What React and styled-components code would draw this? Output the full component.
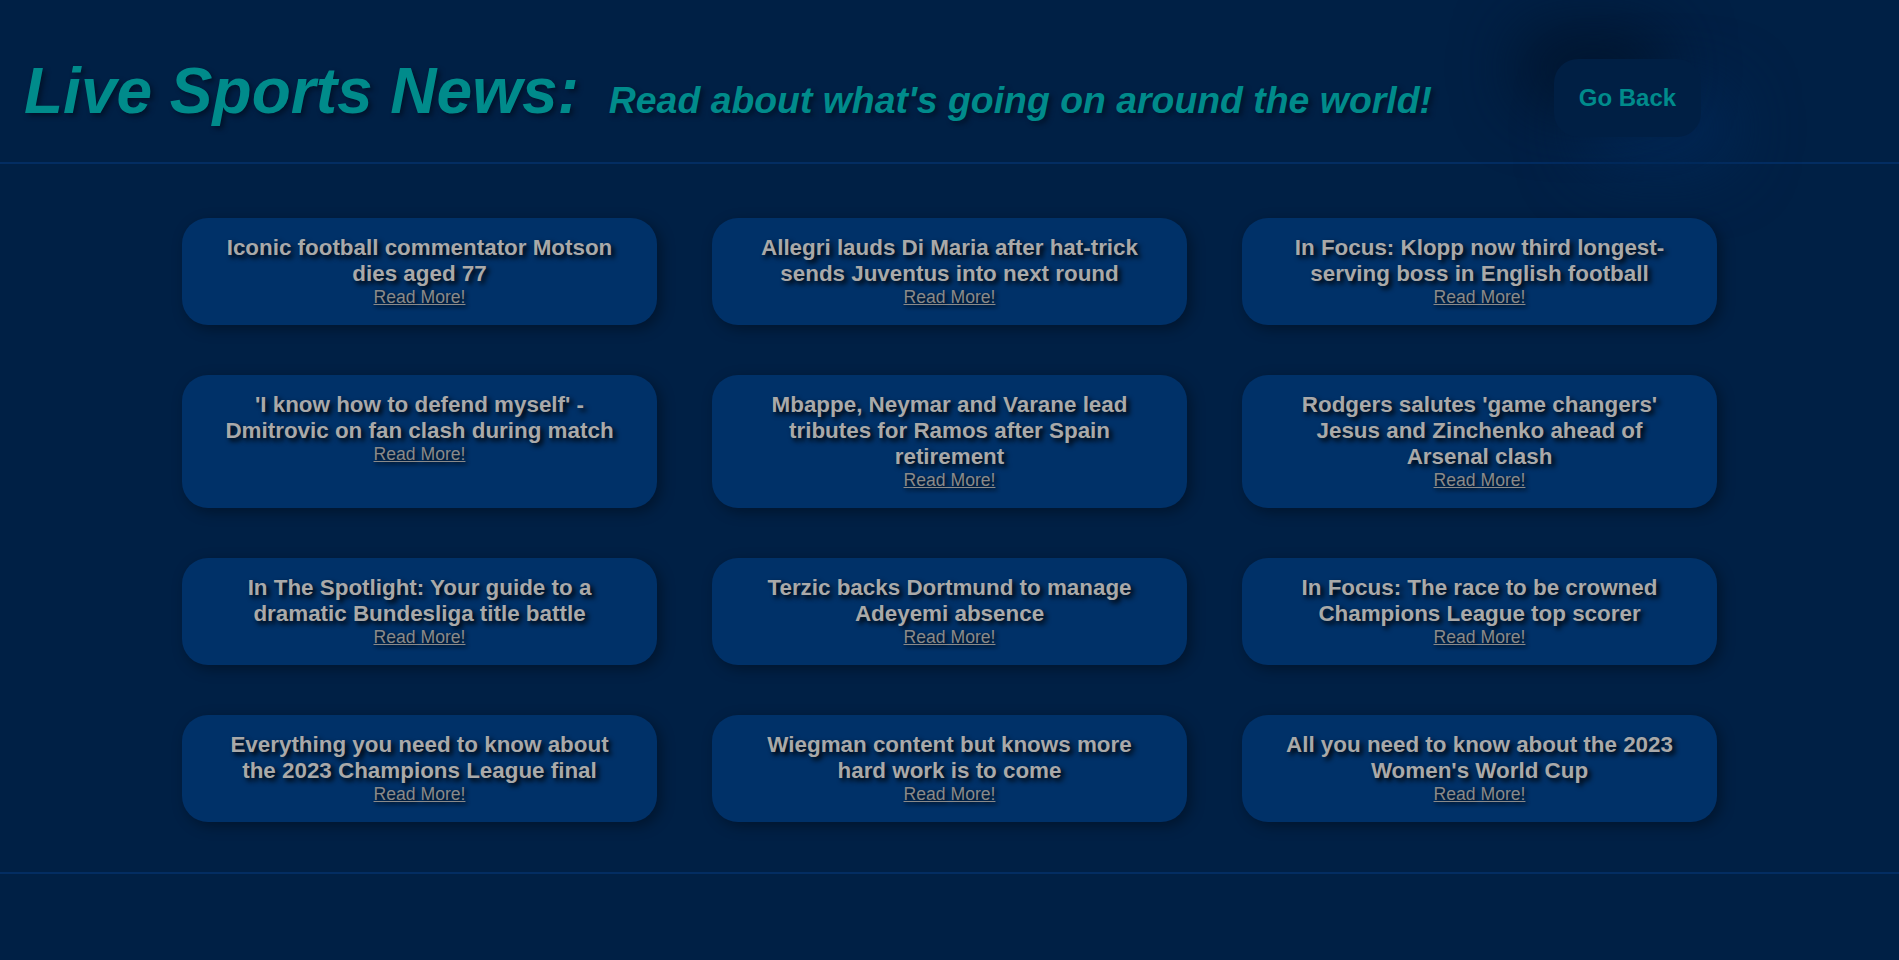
import React from 'react'
import styled, { createGlobalStyle } from 'styled-components'

const GlobalStyle = createGlobalStyle`
    html, body {
        margin: 0;
        background: #002045;
        font-family: "Liberation Sans", Arial, sans-serif;
    }
`

const Header = styled.header`
    display: flex;
    align-items: flex-start;
    height: 164px;
    box-sizing: border-box;
    padding: 54px 0 0 24px;
    border-bottom: 2px solid #032d62;
`

const Titles = styled.div`
    display: flex;
    align-items: baseline;
    gap: 30px;
`

const Title = styled.h1`
    margin: 0;
    font-size: 64px;
    font-style: italic;
    font-weight: bold;
    color: #008b8b;
    text-shadow: 3px 3px 5px #00132b;
`

const SubTitle = styled.h2`
    margin: 0;
    font-size: 37.4px;
    font-style: italic;
    font-weight: bold;
    color: #008b8b;
    text-shadow: 3px 3px 5px #00132b;
`

const BackButton = styled.button`
    margin: 5px 0 0 122px;
    width: 147px;
    height: 78px;
    border: none;
    border-radius: 24px;
    background: #001f44;
    color: #008b8b;
    font-family: inherit;
    font-size: 24px;
    font-weight: bold;
    cursor: pointer;
    box-shadow: -34px -30px 64px #00152e, 30px 30px 64px #002856;
`

const Main = styled.main`
    padding: 54px 0 50px;
    border-bottom: 2px solid #032d62;
`

const Grid = styled.div`
    display: grid;
    grid-template-columns: repeat(3, 475px);
    justify-content: center;
    column-gap: 55px;
    row-gap: 50px;
`

const Card = styled.div`
    display: flex;
    flex-direction: column;
    align-items: center;
    text-align: center;
    padding: 17px 36px 17px;
    border-radius: 26px;
    background: #003168;
    box-shadow: 4px 4px 14px rgba(0, 0, 0, 0.35);
`

const Headline = styled.h3`
    margin: 0;
    font-size: 22.4px;
    font-weight: bold;
    color: #a9a9a9;
    text-shadow: 3px 3px 5px #000;
`

const ReadMore = styled.a`
    font-size: 17.6px;
    color: #8a8a8a;
    text-decoration: underline;
    text-shadow: 2px 2px 4px #000;
    cursor: pointer;
`

const articles = [
    "Iconic football commentator Motson dies aged 77",
    "Allegri lauds Di Maria after hat-trick sends Juventus into next round",
    "In Focus: Klopp now third longest-serving boss in English football",
    "'I know how to defend myself' - Dmitrovic on fan clash during match",
    "Mbappe, Neymar and Varane lead tributes for Ramos after Spain retirement",
    "Rodgers salutes 'game changers' Jesus and Zinchenko ahead of Arsenal clash",
    "In The Spotlight: Your guide to a dramatic Bundesliga title battle",
    "Terzic backs Dortmund to manage Adeyemi absence",
    "In Focus: The race to be crowned Champions League top scorer",
    "Everything you need to know about the 2023 Champions League final",
    "Wiegman content but knows more hard work is to come",
    "All you need to know about the 2023 Women's World Cup",
]

const App = () => {
    return (
        <>
            <GlobalStyle />
            <Header>
                <Titles>
                    <Title>Live Sports News:</Title>
                    <SubTitle>Read about what's going on around the world!</SubTitle>
                </Titles>
                <BackButton>Go Back</BackButton>
            </Header>
            <Main>
                <Grid>
                    {articles.map((title, index) => (
                        <Card key={`article-` + index}>
                            <Headline>{title}</Headline>
                            <ReadMore>Read More!</ReadMore>
                        </Card>
                    ))}
                </Grid>
            </Main>
        </>
    )
}

export default App
